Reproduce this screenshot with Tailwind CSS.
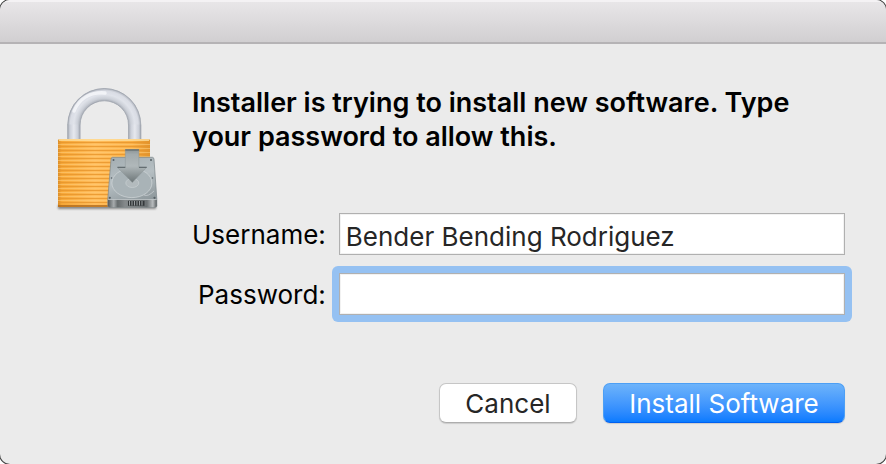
<!DOCTYPE html>
<html lang="en">
<head>
<meta charset="utf-8">
<title>Installer</title>
<script src="https://cdn.jsdelivr.net/npm/@tailwindcss/browser@4"></script>
</head>
<body class="bg-white font-[Inter,'Liberation_Sans',sans-serif] text-[26px] text-black">
<main class="flex min-h-screen flex-col overflow-hidden rounded-[10px] bg-[#ebebeb] shadow-[0_0_0_1px_#444]">
  <header class="h-11 shrink-0 border-t-2 border-b-2 border-t-[#f4f2f4] border-b-[#b5b3b5] bg-linear-to-b from-[#e8e6e8] to-[#d1cfd1]"></header>
  <form class="flex flex-1 gap-7 pt-9 pr-[41px] pb-[41px] pl-[50px]">
    <svg class="h-[136px] w-[114px] shrink-0" viewBox="50 80 114 136" aria-hidden="true">
      <defs>
        <linearGradient id="leg" x1="0" x2="1"><stop offset="0" stop-color="#a4a9b2"/><stop offset=".2" stop-color="#cdd1da"/><stop offset=".5" stop-color="#e6e8ee"/><stop offset=".8" stop-color="#cdd1da"/><stop offset="1" stop-color="#a4a9b2"/></linearGradient>
        <radialGradient id="arch" gradientUnits="userSpaceOnUse" cx="104.200" cy="125" r="37"><stop offset=".64" stop-color="#a4a9b2"/><stop offset=".72" stop-color="#cbcfd7"/><stop offset=".82" stop-color="#e0e3ea"/><stop offset=".92" stop-color="#d9dce4"/><stop offset="1" stop-color="#a4a9b2"/></radialGradient>
        <linearGradient id="body" x1="0" x2="1"><stop offset="0" stop-color="#d88b26"/><stop offset=".04" stop-color="#f6a737"/><stop offset=".4" stop-color="#ffbd5c"/><stop offset=".8" stop-color="#fbb045"/><stop offset="1" stop-color="#e0922b"/></linearGradient>
        <pattern id="ribs" width="4" height="4" y="142" patternUnits="userSpaceOnUse"><path d="M0 .5h4" stroke="#e7952b" stroke-width="1" opacity=".8"/><path d="M0 2.500h4" stroke="#ffcb77" stroke-width="1" opacity=".6"/></pattern>
        <linearGradient id="drive" x1="0" y1="0" x2=".3" y2="1"><stop offset="0" stop-color="#a3adb1"/><stop offset=".5" stop-color="#b6bfc3"/><stop offset="1" stop-color="#8f999d"/></linearGradient>
        <linearGradient id="front" x1="0" x2="1"><stop offset="0" stop-color="#555a5c"/><stop offset=".12" stop-color="#a7abad"/><stop offset=".2" stop-color="#666b6d"/><stop offset=".35" stop-color="#85898b"/><stop offset=".8" stop-color="#6c7173"/><stop offset=".92" stop-color="#b8bcbe"/><stop offset="1" stop-color="#5b6062"/></linearGradient>
        <linearGradient id="arrow" x1="0" y1="0" x2="0" y2="1"><stop offset="0" stop-color="#8b9496"/><stop offset=".15" stop-color="#a3abad"/><stop offset=".5" stop-color="#b0b8ba"/><stop offset="1" stop-color="#6c7577"/></linearGradient>
        <filter id="soft" x="-20%" y="-100%" width="140%" height="300%"><feGaussianBlur stdDeviation="1.200"/></filter>
      </defs>
      <rect x="58" y="205" width="98" height="4" fill="#555" opacity=".65" filter="url(#soft)"/>
      <path d="M67.500 125a36.700 36.700 0 0 1 73.400 0h-12.400a24.200 24.200 0 0 0-48.400 0z" fill="url(#arch)"/>
      <rect x="67.500" y="124.500" width="12.600" height="16" fill="url(#leg)"/>
      <rect x="128.500" y="124.500" width="12.600" height="16" fill="url(#leg)"/>
      <path d="M67.800 140v-15a36.400 36.400 0 0 1 73 0v15M80.100 140v-15a24.200 24.200 0 0 1 48.400 0v15" fill="none" stroke="#9ba1ab" stroke-width=".7"/>
      <path d="M74 111C80 97 92 92 105 93" fill="none" stroke="#f8f9fc" stroke-width="3.500" stroke-linecap="round" opacity=".75"/>
      <rect x="58" y="139" width="92" height="68" rx="1.500" fill="url(#body)"/>
      <rect x="58" y="142" width="92" height="62" fill="url(#ribs)"/>
      <path d="M59 140h90" stroke="#ffe3a4" stroke-width="1.500"/>
      <path d="M58 206h92" stroke="#ad671a" stroke-width="1.500"/>
      <path d="M112.500 157.300h40q1.200 0 1.500 2l2.800 39.500v7q0 1.500-1.500 1.500h-46q-1.500 0-1.500-1.500v-7l3.200-39.500q.200-2 1.500-2z" fill="url(#drive)" stroke="#7d878b" stroke-width=".7"/>
      <ellipse cx="131.900" cy="183" rx="20" ry="14.600" fill="#a9b3b7" stroke="#cbd2d4" stroke-width=".8"/>
      <ellipse cx="132.300" cy="183" rx="6.500" ry="4.500" fill="#b3bbbe" stroke="#c9d0d2" stroke-width=".7"/>
      <path d="M144 195q4 2 10-4" fill="none" stroke="#c5cccf" stroke-width=".8"/>
      <path d="M107.900 199.500h48.800v6q0 1.800-1.800 1.800h-45.200q-1.800 0-1.800-1.800z" fill="url(#front)"/>
      <path d="M108.200 199.500h48.400" stroke="#c2c8ca" stroke-width=".8"/>
      <rect x="128" y="200.800" width="16.500" height="5" fill="#34383a"/>
      <path d="M129.500 201v4.500m2.500-4.500v4.500m2.500-4.500v4.500m2.500-4.500v4.500m2.500-4.500v4.500m2.500-4.500v4.500" stroke="#a7acae" stroke-width=".9"/>
      <g fill="#566065"><circle cx="113.500" cy="160" r="1"/><circle cx="151" cy="160" r="1"/><circle cx="109.800" cy="197.800" r="1.100"/><circle cx="154.500" cy="197.800" r="1.100"/><circle cx="111.500" cy="178" r=".8"/><circle cx="152.500" cy="178" r=".8"/></g>
      <path d="M125.300 149.500h13.600v17.800h7.800l-14.400 15.200-14.900-15.200h7.900z" fill="url(#arrow)" stroke="#8b9496" stroke-width=".5"/>
      <path d="M125.300 150h13.600M117.500 167.300h7.800M139 167.300h7.700" stroke="#566063" stroke-width="1"/>
    </svg>
    <div class="flex min-w-0 flex-1 flex-col pt-1.5">
      <h1 class="text-[27px] leading-[34px] font-semibold">Installer is trying to install new software. Type<br>your password to allow this.</h1>
      <div class="mt-[59px] grid grid-cols-[auto_1fr] items-center gap-x-[13px] gap-y-[18px]">
        <label for="username" class="text-right">Username:</label>
        <input id="username" type="text" value="Bender Bending Rodriguez" class="h-[42px] w-full min-w-0 border border-[#b0b0b0] bg-white px-1.5 pt-1 text-[#262626] shadow-[inset_0_0_0_1px_#f2f2f2] outline-none">
        <label for="password" class="text-right">Password:</label>
        <div class="-m-[7px] flex rounded-md bg-[#95c1f2] p-[7px]">
          <input id="password" type="password" class="h-[42px] w-full min-w-0 border border-[#b0b0b0] bg-white px-1.5 shadow-[inset_0_0_0_1px_#f2f2f2] outline-none">
        </div>
      </div>
      <div class="mt-auto flex justify-end gap-[26px]">
        <button type="button" class="h-10 w-[138px] rounded-[7px] border border-[#c6c6c6] border-b-[#adadad] bg-white pb-0.5 text-[#262626] shadow-[0_1px_1px_#0002]">Cancel</button>
        <button type="submit" class="h-10 w-[242px] rounded-[7px] border border-[#4c9ff5] border-b-[#0060f0] bg-linear-to-b from-[#6db3fa] to-[#077bff] pb-0.5 text-white shadow-[0_1px_1px_#0002]">Install Software</button>
      </div>
    </div>
  </form>
</main>
</body>
</html>
